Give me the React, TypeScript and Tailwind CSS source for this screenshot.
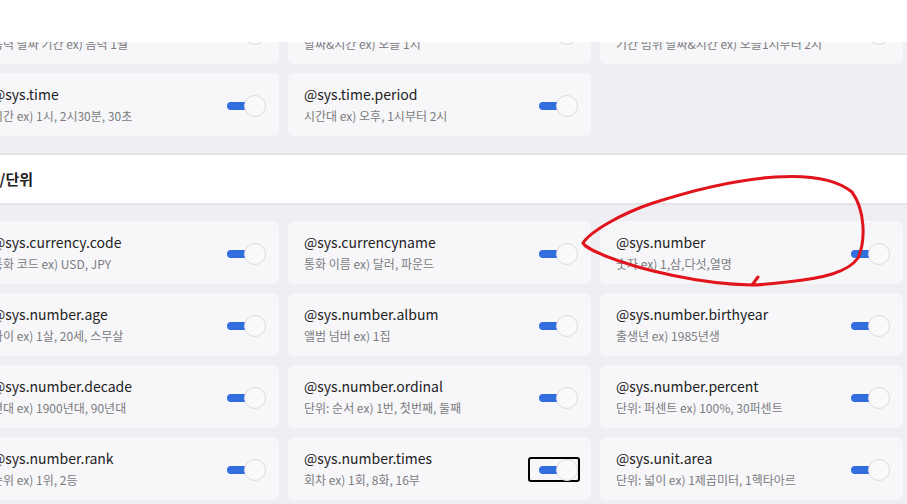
const topRows = [
  [
    { name: "@sys.date.lunar.period", desc: "음력 날짜 기간 ex) 음력 1월" },
    { name: "@sys.date.time", desc: "날짜&시간 ex) 오늘 1시" },
    { name: "@sys.date.time.period", desc: "기간 범위 날짜&시간 ex) 오늘1시부터 2시" },
  ],
  [
    { name: "@sys.time", desc: "시간 ex) 1시, 2시30분, 30초" },
    { name: "@sys.time.period", desc: "시간대 ex) 오후, 1시부터 2시" },
  ],
];

const numberItems = [
  { name: "@sys.currency.code", desc: "통화 코드 ex) USD, JPY" },
  { name: "@sys.currencyname", desc: "통화 이름 ex) 달러, 파운드" },
  { name: "@sys.number", desc: "숫자 ex) 1,삼,다섯,열명" },
  { name: "@sys.number.age", desc: "나이 ex) 1살, 20세, 스무살" },
  { name: "@sys.number.album", desc: "앨범 넘버 ex) 1집" },
  { name: "@sys.number.birthyear", desc: "출생년 ex) 1985년생" },
  { name: "@sys.number.decade", desc: "연대 ex) 1900년대, 90년대" },
  { name: "@sys.number.ordinal", desc: "단위: 순서 ex) 1번, 첫번째, 둘째" },
  { name: "@sys.number.percent", desc: "단위: 퍼센트 ex) 100%, 30퍼센트" },
  { name: "@sys.number.rank", desc: "순위 ex) 1위, 2등" },
  { name: "@sys.number.times", desc: "회차 ex) 1회, 8화, 16부", focused: true },
  { name: "@sys.unit.area", desc: "단위: 넓이 ex) 1제곱미터, 1헥타아르" },
];

function Toggle({ focused }: { focused?: boolean }) {
  return (
    <button
      className={
        "flex items-center justify-end w-[52px] h-[25px] mt-[2px] rounded-[3px] border-2 " +
        (focused ? "border-black" : "border-transparent")
      }
    >
      <span className="w-[22px] h-2 rounded-full bg-[#2f6edc]" />
      <span className="-ml-[5px] w-[22px] h-[22px] shrink-0 rounded-full bg-[#fafafb] border border-[#dadadd]" />
    </button>
  );
}

function Card({ name, desc, focused }: { name: string; desc: string; focused?: boolean }) {
  return (
    <div className="h-[63px] rounded-md bg-[#f7f7fa] flex items-center justify-between pl-4 pr-[11px]">
      <div className="flex flex-col gap-[3px] -mt-px">
        <p className="text-[14px] leading-5 text-[#222]">{name}</p>
        <p className="text-[12px] leading-4 text-[#7b7b7e] mt-px">{desc}</p>
      </div>
      <Toggle focused={focused} />
    </div>
  );
}

export default function App() {
  return (
    <div className="relative w-[907px] h-[504px] overflow-hidden bg-[#eeeef3] font-['Noto_Sans_CJK_KR',sans-serif]">
      <div className="w-[931px] -ml-[24px]">
        <div className="pt-px pb-[17px] flex flex-col gap-[9px]">
          {topRows.map((row, i) => (
            <div key={i} className="grid grid-cols-[303px_303px_303px] gap-[9px]">
              {row.map((it) => (
                <Card key={it.name} {...it} />
              ))}
            </div>
          ))}
        </div>

        <div className="h-[52px] bg-white border-y-2 border-[#e3e3e8] flex items-center">
          <h3 className="-ml-[4px] text-[15px] font-bold text-[#222]">숫자/단위</h3>
        </div>

        <div className="pt-4 grid grid-cols-[303px_303px_303px] gap-[9px]">
          {numberItems.map((it) => (
            <Card key={it.name} {...it} />
          ))}
        </div>
      </div>

      {/* sticky header strip */}
      <div className="absolute top-0 left-0 right-0 h-[42px] bg-white" />

      {/* hand-drawn annotation */}
      <svg className="absolute inset-0 pointer-events-none" width="907" height="504" viewBox="0 0 907 504">
        <path
          d="M758 277 L752 285 C700 284 640 270 603 255 C592 250 585 247 583 243 C590 232 620 214 653 203 C690 191 730 180 775 177 C805 175 835 178 852 192 C865 210 866 240 858 258 C848 272 825 278 787 282 C770 284 760 285 752 285"
          fill="none"
          stroke="#e0141a"
          strokeWidth="3"
          strokeLinecap="round"
          strokeLinejoin="round"
        />
      </svg>
    </div>
  );
}
